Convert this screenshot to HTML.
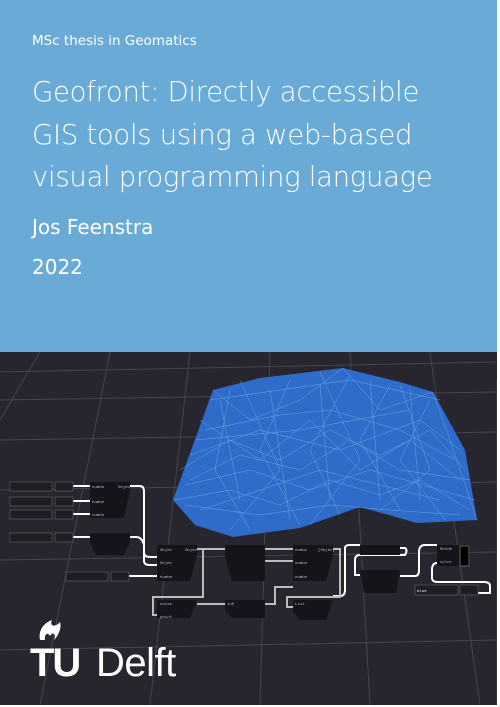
<!DOCTYPE html>
<html><head><meta charset="utf-8"><style>
body{margin:0;width:500px;height:707px;background:#fff;overflow:hidden;font-family:"Liberation Sans","DejaVu Sans",sans-serif}
#top{position:absolute;left:0;top:0;width:497px;height:352px;background:#69abd6;color:#fff}
#top div{position:absolute;left:32px;white-space:nowrap}
#bot{position:absolute;left:0;top:352px;width:497px;height:353px;background:#27262f;overflow:hidden}
</style></head><body>
<div id="top">
<div style="top:33px;font-size:13.5px;font-family:'DejaVu Sans',sans-serif">MSc thesis in Geomatics</div>
<div style="top:71px;font-size:27.5px;line-height:42.5px;font-family:'DejaVu Sans',sans-serif;font-weight:200;letter-spacing:-0.3px">Geofront: Directly accessible<br>GIS tools using a web-based<br>visual programming language</div>
<div style="top:215px;font-size:20px;font-family:'DejaVu Sans',sans-serif">Jos Feenstra</div>
<div style="top:255px;font-size:20px;font-family:'DejaVu Sans',sans-serif">2022</div>
</div>
<div id="bot">
<svg width="497" height="353" viewBox="0 352 497 353" xmlns="http://www.w3.org/2000/svg">
<g stroke="#44434f" stroke-width="1" fill="none">
<path d="M0 372 L497 362 M0 400 L497 392 M0 440 L497 432 M0 490 L497 482 M0 560 L497 552 M0 650 L497 640"/>
<path d="M40 352 L0 420 M110 352 L40 705 M190 352 L150 705 M270 352 L260 705 M350 352 L370 705 M430 352 L480 705 M497 380 L497 705"/>
</g>
<polygon points="173,500 213,390 260,378 343,368 400,382 433,392 465,450 477,520 417,523 360,507 300,528 233,537 195,525" fill="#2f6bc8"/>
<g stroke="#7ab8f5" stroke-width="0.5" fill="none" opacity="0.75">
<path d="M213,390 L250,420 L300,400 L343,368 L380,410 L433,392 L450,440 L477,520"/>
<path d="M180,470 L230,440 L280,460 L330,430 L380,455 L430,430 L465,470"/>
<path d="M175,500 L230,490 L280,505 L330,480 L380,495 L420,480 L470,510"/>
<path d="M200,420 L260,460 L310,420 L360,470 L410,440 L460,480"/>
<path d="M220,400 L240,500 M270,390 L290,520 M320,385 L330,500 M370,380 L380,500 M410,390 L420,500"/>
<path d="M195,440 L300,430 L410,410 M200,510 L320,470 L440,500"/>
<path d="M210,400 L350,380 L440,400 M190,455 L260,430 L340,450 L420,420 L460,450 M185,485 L250,470 L310,490 L370,470 L440,490 L475,500"/>
<path d="M230,390 L215,470 L250,530 M290,380 L260,450 L300,525 M350,375 L310,450 L340,515 M390,385 L360,440 L400,510 M430,400 L400,460 L445,520"/>
<path d="M205,430 L280,415 L330,410 L400,430 L455,460 M190,480 L240,455 L300,470 L350,440 L400,470 L470,480 M185,505 L260,515 L330,505 L390,510 L460,515"/>
<path d="M240,380 L280,470 L230,530 M320,372 L360,460 L310,525 M400,385 L430,470 L380,510"/>
</g>
<g fill="none" stroke="#fff" stroke-width="2">
<path d="M73,486 H90 M73,501 H90 M73,514 H90 M73,537 H90 M128,576 H157"/>
<path d="M130,486 H140 Q144,486 144,492 V552 Q144,557 150,557 H157"/>
<path d="M130,537 H136 Q142,537 144,545 V561 Q144,565 150,565 H157"/>
<path d="M333,596 H340 Q345,596 345,590 V548 Q345,545 350,545 H360 M400,548 H405 Q408,550 405,555 H360 Q355,555 355,560 V575 H360"/>
<path d="M400,576 H415 Q419,576 419,570 V552 Q419,545 425,545 H437 M437,563 Q432,563 432,570 V578 Q432,582 438,582 H484 Q490,582 490,586 V593 H478"/>
</g>
<g fill="none" stroke="#bbb" stroke-width="2">
<path d="M197,549 H225 M265,549 H293 M265,561 H293 M197,549 H203 V597 H153 V615 H157 M197,604 H225 M265,604 H275 V587 H293 M333,549 H340 V597 H287 V607 H293"/>
</g>
<g fill="#1e1d24" stroke="#555" stroke-width="0.8">
<rect x="10" y="482" width="42" height="9"/><rect x="10" y="497" width="42" height="9"/><rect x="10" y="510" width="42" height="9"/><rect x="10" y="533" width="42" height="9"/><rect x="66" y="572" width="42" height="9"/>
<rect x="55" y="482" width="18" height="9"/><rect x="55" y="497" width="18" height="9"/><rect x="55" y="510" width="18" height="9"/><rect x="55" y="533" width="18" height="9"/><rect x="111" y="572" width="18" height="9"/>
<rect x="415" y="585" width="43" height="10"/><rect x="460" y="585" width="18" height="10"/>
</g>
<g fill="#15141a">
<path d="M90,482 H130 V490 L124,518 H90 Z"/>
<path d="M90,533 H130 V542 L124,555 H96 L90,542 Z"/>
<path d="M157,545 H197 V556 L190,581 H157 Z"/>
<path d="M225,545 H265 V581 H232 L225,556 Z"/>
<path d="M293,545 H333 V556 L326,581 H293 Z"/>
<path d="M360,545 H400 V555 H360 Z"/>
<path d="M360,570 H400 L396,593 H364 Z"/>
<path d="M437,545 H470 V566 H437 Z"/>
<path d="M157,600 H197 L190,618 H157 Z"/>
<path d="M225,600 H265 V618 H232 L225,610 Z"/>
<path d="M293,600 H333 L326,620 H300 L293,612 Z"/>
</g>
<rect x="460" y="546" width="9" height="20" fill="#000" stroke="#777" stroke-width="0.8"/>
<g fill="#bbb" font-size="4" font-family="Liberation Mono,monospace">
<text x="92" y="488">numbe</text><text x="118" y="488">Objec</text><text x="92" y="503">numbe</text><text x="92" y="516">numbe</text>
<text x="160" y="551">Objec</text><text x="185" y="551">Objec</text><text x="160" y="564">Objec</text><text x="160" y="578">numbe</text>
<text x="295" y="551">numbe</text><text x="318" y="551">[Objec]</text><text x="295" y="564">numbe</text><text x="295" y="578">numbe</text>
<text x="160" y="605">noise</text><text x="160" y="618">point</text><text x="227" y="605">in0</text><text x="295" y="605">List</text><text x="440" y="550">Rende</text><text x="440" y="563">color</text>
<text x="417" y="592" fill="#fff">blue</text>
</g>
<g fill="#fff">
<path d="M40,640 C38,630 44,623 52,620 C49,626 55,628 60,622 C62,628 58,636 54,640 C57,633 52,632 50,636 C48,632 44,634 45,640 Z"/>
<text x="30" y="676" font-size="40" font-weight="bold" font-family="Liberation Sans,sans-serif" letter-spacing="-2">TU</text>
<text x="96" y="676" font-size="40" font-family="Liberation Sans,sans-serif" letter-spacing="-0.5">Delft</text>
</g>
</svg>
</div>
</body></html>
